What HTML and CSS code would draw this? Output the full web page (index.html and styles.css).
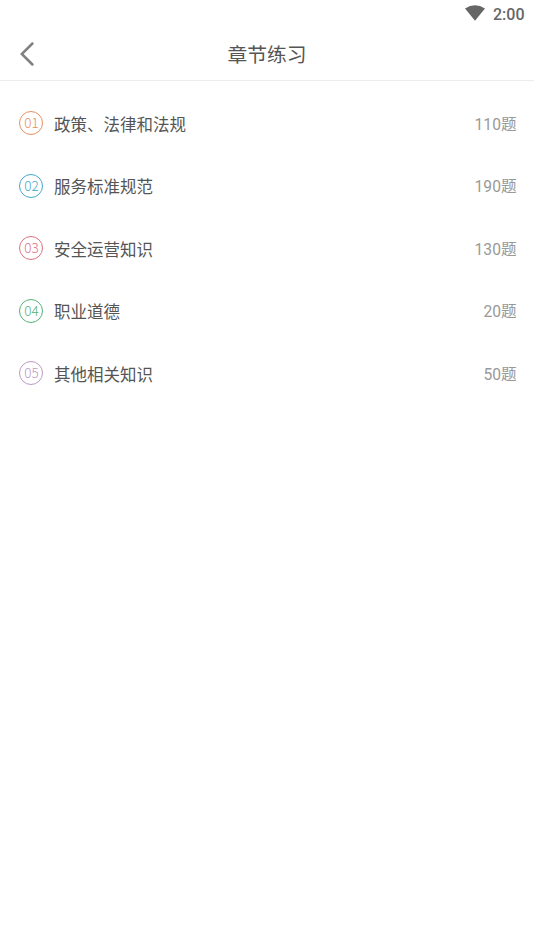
FILE: index.html
```html
<!DOCTYPE html>
<html lang="zh-CN">
<head>
<meta charset="utf-8">
<title>章节练习</title>
<link rel="stylesheet" href="styles.css">
</head>
<body>
<div class="status">
  <svg class="wifi" width="20" height="16" viewBox="0 0 20 16"><path d="M0 3.6Q10-3 20 3.6L10 15.8Z"/></svg>
  <span class="time">2:00</span>
</div>
<header class="header">
  <svg class="back" width="14" height="24" viewBox="0 0 14 24"><path d="M12.4 1.5L1.8 12L12.4 22.5"/></svg>
  <h1 class="title">章节练习</h1>
</header>
<main class="list">
  <div class="row"><span class="num orange">01</span><span class="name">政策、法律和法规</span><span class="count">110题</span></div>
  <div class="row"><span class="num blue">02</span><span class="name">服务标准规范</span><span class="count">190题</span></div>
  <div class="row"><span class="num pink">03</span><span class="name">安全运营知识</span><span class="count">130题</span></div>
  <div class="row"><span class="num green">04</span><span class="name">职业道德</span><span class="count">20题</span></div>
  <div class="row"><span class="num purple">05</span><span class="name">其他相关知识</span><span class="count">50题</span></div>
</main>
</body>
</html>
```
FILE: styles.css
```css
* { box-sizing: border-box; }
body { margin: 0; min-height: 949px; background: #fff; font-family: Roboto, "Noto Sans CJK SC", sans-serif; color: #555; }
.status { display: flex; justify-content: flex-end; align-items: center; height: 28px; padding-right: 9.5px; }
.wifi { margin: 0 8px 2px 0; fill: #666; }
.time { padding-top: 1px; font-size: 16px; font-weight: 500; line-height: 27px; color: #666; }
.header { display: grid; grid-template-columns: 34px 1fr 34px; align-items: center; height: 53px; border-bottom: 1px solid #ececec; }
.back { justify-self: end; fill: none; stroke: #808080; stroke-width: 2.5; stroke-linecap: round; }
.title { margin: 0; padding-top: 4px; text-align: center; font-size: 19.8px; font-weight: 400; line-height: 30px; }
.list { padding: 10.9px 17.5px 0 19.4px; }
.row { display: flex; align-items: center; height: 62.5px; font-size: 16.5px; }
.num { width: 24px; height: 24px; border: 1.3px solid; border-radius: 50%; text-align: center; font: 300 13.5px/21px "Noto Sans CJK SC", sans-serif; }
.name { flex: 1; margin-left: 10.6px; padding-top: 1px; }
.count { padding-bottom: 1px; font-size: 15.6px; color: #999; }
.orange { color: #e69060; }
.blue { color: #43a9cb; }
.pink { color: #dd7080; }
.green { color: #52b378; }
.purple { color: #bd98c5; }
```
